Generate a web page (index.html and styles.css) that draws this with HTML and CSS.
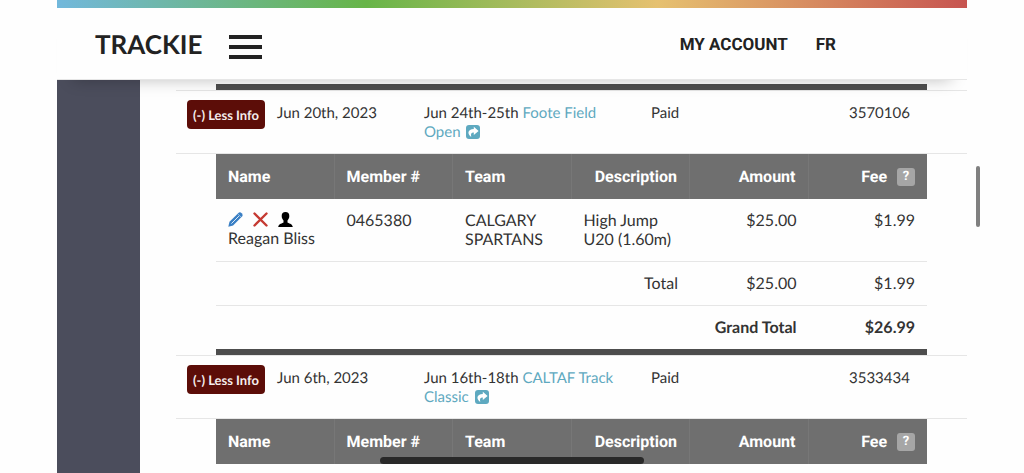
FILE: index.html
```
<!DOCTYPE html>
<html lang="en">
<head>
    <meta charset="UTF-8">
    <meta name="viewport" content="width=device-width, initial-scale=1.0">
    <title>Trackie - My Account</title>
    <link rel="stylesheet" href="styles.css">
</head>
<body>
    <svg class="sprite" width="0" height="0" aria-hidden="true">
        <symbol id="share" viewBox="0 0 14 14">
            <rect width="14" height="14" rx="3" fill="currentColor"/>
            <path d="M7.8 1.8 12.6 5.9 7.8 10V7.6C5.4 7.5 4.6 8.6 5.2 12 1.2 9.3 1.2 4.3 7.8 4.1Z" fill="#fff"/>
        </symbol>
    </svg>

    <div class="page">
        <header class="header">
            <a class="logo" href="#">TRACKIE</a>
            <button class="menu-btn" type="button" aria-label="Menu">
                <span></span>
                <span></span>
                <span></span>
            </button>
            <nav class="nav">
                <a href="#">MY ACCOUNT</a>
                <a href="#">FR</a>
            </nav>
        </header>

        <div class="content">
            <aside class="sidebar"></aside>
            <main class="main">
                <table class="orders">
                    <colgroup>
                        <col class="col-info">
                        <col class="col-date">
                        <col class="col-event">
                        <col class="col-status">
                        <col class="col-id">
                    </colgroup>
                    <tbody>
                        <tr class="details-row">
                            <td colspan="5"><div class="details"></div></td>
                        </tr>
                        <tr class="order">
                            <td><button class="info-btn" type="button">(-) Less Info</button></td>
                            <td>Jun 20th, 2023</td>
                            <td>Jun 24th-25th <a href="#">Foote Field Open <svg class="share"><use href="#share"/></svg></a></td>
                            <td>Paid</td>
                            <td>3570106</td>
                        </tr>
                        <tr class="details-row">
                            <td colspan="5">
                                <div class="details">
                                    <table class="items">
                                        <thead>
                                            <tr>
                                                <th>Name</th>
                                                <th>Member #</th>
                                                <th>Team</th>
                                                <th class="right">Description</th>
                                                <th class="right">Amount</th>
                                                <th class="right">Fee <button class="help" type="button">?</button></th>
                                            </tr>
                                        </thead>
                                        <tbody>
                                            <tr>
                                                <td>
                                                    <div class="actions">
                                                        <a href="#" aria-label="Edit">
                                                            <svg width="15" height="15" viewBox="0 0 15 15">
                                                                <path d="M.3 14.7 1.5 9.8 10.4 .9Q12-.4 13.7 1.3 15.4 3 14 4.6L5.1 13.5Z" fill="#3a7fc4"/>
                                                                <path d="M3.4 11.6 10.9 4.1" stroke="#dcebf8" stroke-width="1" fill="none"/>
                                                                <path d="m10.1 2.2 2.7 2.7" stroke="#b7d5ee" stroke-width=".8"/>
                                                            </svg>
                                                        </a>
                                                        <a href="#" aria-label="Delete">
                                                            <svg width="15" height="15" viewBox="0 0 15 15">
                                                                <path d="m1.5 1.5 12 12M13.5 1.5l-12 12" stroke="#c53a32" stroke-width="2.4" stroke-linecap="round"/>
                                                            </svg>
                                                        </a>
                                                        <a href="#" aria-label="Profile">
                                                            <svg width="15" height="15" viewBox="0 0 15 15">
                                                                <path d="M7.5 0C10 0 11.4 1.5 11.3 4 11.3 6 10.5 7.4 9.5 8.4V10.4C10.2 11.3 14.5 11.4 14.8 15H.2C.5 11.4 4.8 11.3 5.5 10.4V8.4C4.5 7.4 3.7 6 3.7 4 3.6 1.5 5 0 7.5 0Z" fill="#000"/>
                                                            </svg>
                                                        </a>
                                                    </div>
                                                    Reagan Bliss
                                                </td>
                                                <td>0465380</td>
                                                <td>CALGARY SPARTANS</td>
                                                <td>High Jump U20 (1.60m)</td>
                                                <td class="right">$25.00</td>
                                                <td class="right">$1.99</td>
                                            </tr>
                                            <tr>
                                                <td class="right" colspan="4">Total</td>
                                                <td class="right">$25.00</td>
                                                <td class="right">$1.99</td>
                                            </tr>
                                            <tr class="grand-total">
                                                <td class="right" colspan="5">Grand Total</td>
                                                <td class="right">$26.99</td>
                                            </tr>
                                        </tbody>
                                    </table>
                                </div>
                            </td>
                        </tr>
                        <tr class="order">
                            <td><button class="info-btn" type="button">(-) Less Info</button></td>
                            <td>Jun 6th, 2023</td>
                            <td>Jun 16th-18th <a href="#">CALTAF Track Classic <svg class="share"><use href="#share"/></svg></a></td>
                            <td>Paid</td>
                            <td>3533434</td>
                        </tr>
                        <tr class="details-row">
                            <td colspan="5">
                                <div class="details open">
                                    <table class="items">
                                        <thead>
                                            <tr>
                                                <th>Name</th>
                                                <th>Member #</th>
                                                <th>Team</th>
                                                <th class="right">Description</th>
                                                <th class="right">Amount</th>
                                                <th class="right">Fee <button class="help" type="button">?</button></th>
                                            </tr>
                                        </thead>
                                    </table>
                                </div>
                            </td>
                        </tr>
                    </tbody>
                </table>
            </main>
        </div>
    </div>

    <div class="scroll-thumb"></div>
    <div class="home-bar"></div>
</body>
</html>
```
FILE: styles.css
```
:root {
    --heading-font: Roboto, 'Open Sans', sans-serif;
    --link: #5ea9c0;
    --line: #e6e6e6;
}

* {
    box-sizing: border-box;
}

body {
    margin: 0;
    background: #fefefe;
    color: #333;
    font-family: Lato, sans-serif;
    font-size: 16px;
    line-height: 19px;
    text-rendering: geometricPrecision;
}

a {
    color: var(--link);
    text-decoration: none;
}

button {
    border: 0;
    font-family: inherit;
    text-rendering: inherit;
    cursor: pointer;
}

.sprite {
    position: absolute;
}

.page {
    display: flex;
    flex-direction: column;
    min-height: 100vh;
    margin: 0 57px;
}

/* header */
.header {
    position: relative;
    z-index: 1;
    display: flex;
    align-items: center;
    height: 80px;
    padding: 8px 131px 0 38px;
    background: linear-gradient(90deg, #72b8dc, #67b548 34%, #e6c170 66%, #c75450) top / 100% 8px no-repeat #fefefe;
    border-bottom: 1px solid var(--line);
    box-shadow: 0 16px 16px -16px rgba(0, 0, 0, 0.25);
}

.logo {
    color: #222;
    font-size: 26px;
    font-weight: bold;
    line-height: 32px;
}

.menu-btn {
    display: flex;
    flex-direction: column;
    gap: 6px;
    margin: 6px 0 0 26px;
    padding: 0;
    background: none;
}

.menu-btn span {
    width: 33px;
    height: 4px;
    background: #222;
}

.nav {
    display: flex;
    gap: 28px;
    margin: 4px 0 0 auto;
}

.nav a {
    color: #222;
    font-family: var(--heading-font);
    font-size: 17px;
    font-weight: bold;
}

/* content */
.content {
    display: flex;
    flex: 1;
}

.sidebar {
    flex: 0 0 83px;
    background: #4b4d5c;
}

.main {
    flex: 1;
    padding: 4px 0 0 36px;
}

table {
    width: 100%;
    border-spacing: 0;
    table-layout: fixed;
}

.col-info { width: 89px; }
.col-date { width: 147px; }
.col-event { width: 227px; }
.col-status { width: 198px; }

.order > td {
    padding: 13px 12px 11px;
    border-top: 1px solid var(--line);
    border-bottom: 1px solid var(--line);
    font-size: 15px;
    vertical-align: top;
}

.order > td:first-child {
    padding: 9px 0 0 11px;
}

.info-btn {
    padding: 5px 6px 4px;
    border-radius: 4px;
    background: #5c0d08;
    color: #f5eeee;
    font-size: 13px;
    font-weight: bold;
    line-height: 20px;
    white-space: nowrap;
}

.share {
    width: 14px;
    height: 14px;
    margin-left: 2px;
    vertical-align: -2px;
}

.details-row > td {
    padding: 0 40px;
}

.details {
    border-bottom: 6px solid #4d4d4d;
}

.details.open {
    border-bottom: 0;
}

.items th {
    height: 45px;
    padding: 0 12px;
    background: #6f6f6f;
    border-right: 1px solid #777;
    color: #fff;
    font-family: var(--heading-font);
    font-size: 16px;
    text-align: left;
    white-space: nowrap;
}

.items th:last-child {
    border-right: 0;
}

.items td {
    padding: 12px;
    border-bottom: 1px solid var(--line);
    vertical-align: top;
}

.items .right {
    text-align: right;
}

.items .grand-total td {
    border-bottom: 0;
    font-weight: bold;
}

.help {
    width: 18px;
    height: 18px;
    margin-left: 6px;
    padding: 0;
    border-radius: 3px;
    background: #a6a6a6;
    color: #fff;
    font-size: 13px;
    font-weight: bold;
    line-height: 18px;
    vertical-align: middle;
}

.actions {
    display: flex;
    gap: 10px;
    height: 18px;
    padding-top: 1px;
}

.actions svg {
    display: block;
}

/* overlays */
.scroll-thumb {
    position: fixed;
    top: 166px;
    right: 44px;
    width: 4px;
    height: 61px;
    border-radius: 2px;
    background: #808080;
}

.home-bar {
    position: fixed;
    bottom: 9px;
    left: 50%;
    width: 264px;
    height: 7px;
    border-radius: 4px;
    background: #292929;
    transform: translateX(-50%);
}
```
